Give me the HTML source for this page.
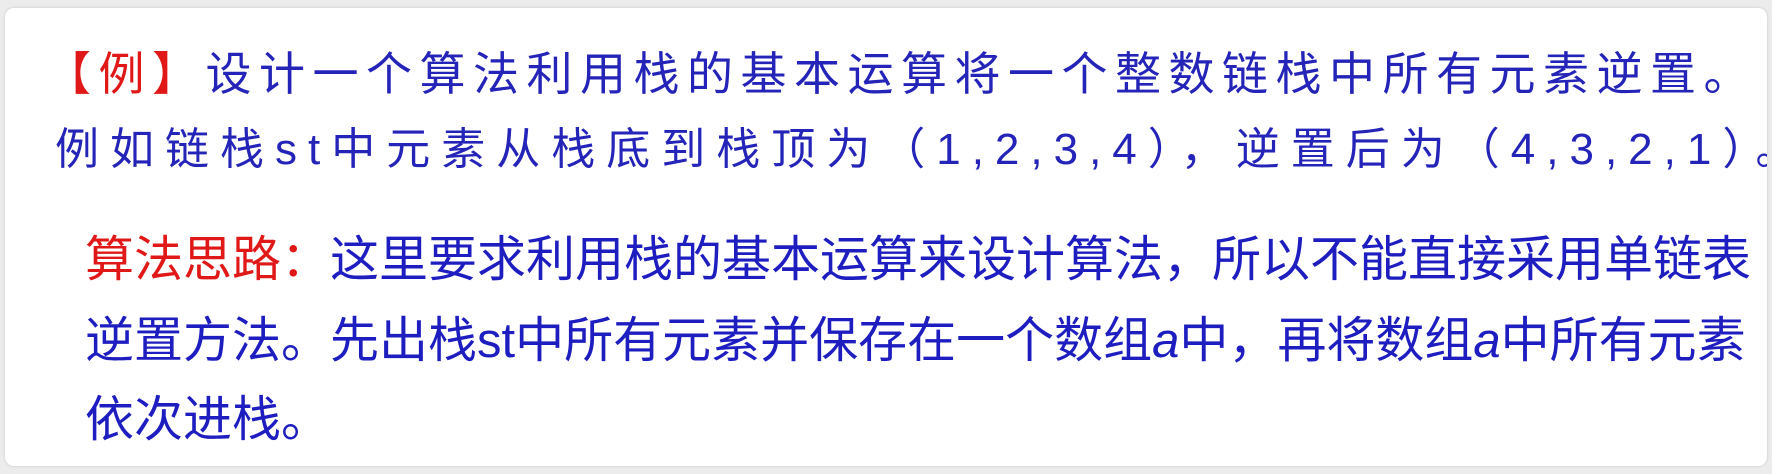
<!DOCTYPE html>
<html><head><meta charset="utf-8"><style>
html,body{margin:0;padding:0;}
body{width:1772px;height:474px;background:#ececec;position:relative;overflow:hidden;font-family:"Liberation Sans","Noto Sans CJK SC",sans-serif;}
.card{position:absolute;left:5px;top:8px;width:1762px;height:458px;background:#fff;border-radius:9px;box-shadow:0 0 3px rgba(0,0,0,.15);overflow:hidden;}
.l{position:absolute;white-space:nowrap;color:#2424b8;}
.l1{left:40px;top:30px;font-size:46px;letter-spacing:7.5px;}
.l2{left:50px;top:105px;font-size:44px;letter-spacing:11px;}
.r{color:#e01818;}
.s{font-size:49px;letter-spacing:0px;color:#1e1ec0;}
.l3{left:80px;top:212px;}
.l4{left:80px;top:293px;}
.l5{left:80px;top:372px;}
i{font-family:"Liberation Sans",sans-serif;}
</style></head><body>
<div class="card">
<div class="l l1"><span class="r">【例】</span>设计一个算法利用栈的基本运算将一个整数链栈中所有元素逆置。</div>
<div class="l l2">例如链栈st中元素从栈底到栈顶为（1,2,3,4），逆置后为（4,3,2,1）。</div>
<div class="l s l3"><span class="r">算法思路：</span>这里要求利用栈的基本运算来设计算法，所以不能直接采用单链表</div>
<div class="l s l4">逆置方法。先出栈st中所有元素并保存在一个数组<i>a</i>中，再将数组<i>a</i>中所有元素</div>
<div class="l s l5">依次进栈。</div>
</div>
</body></html>
